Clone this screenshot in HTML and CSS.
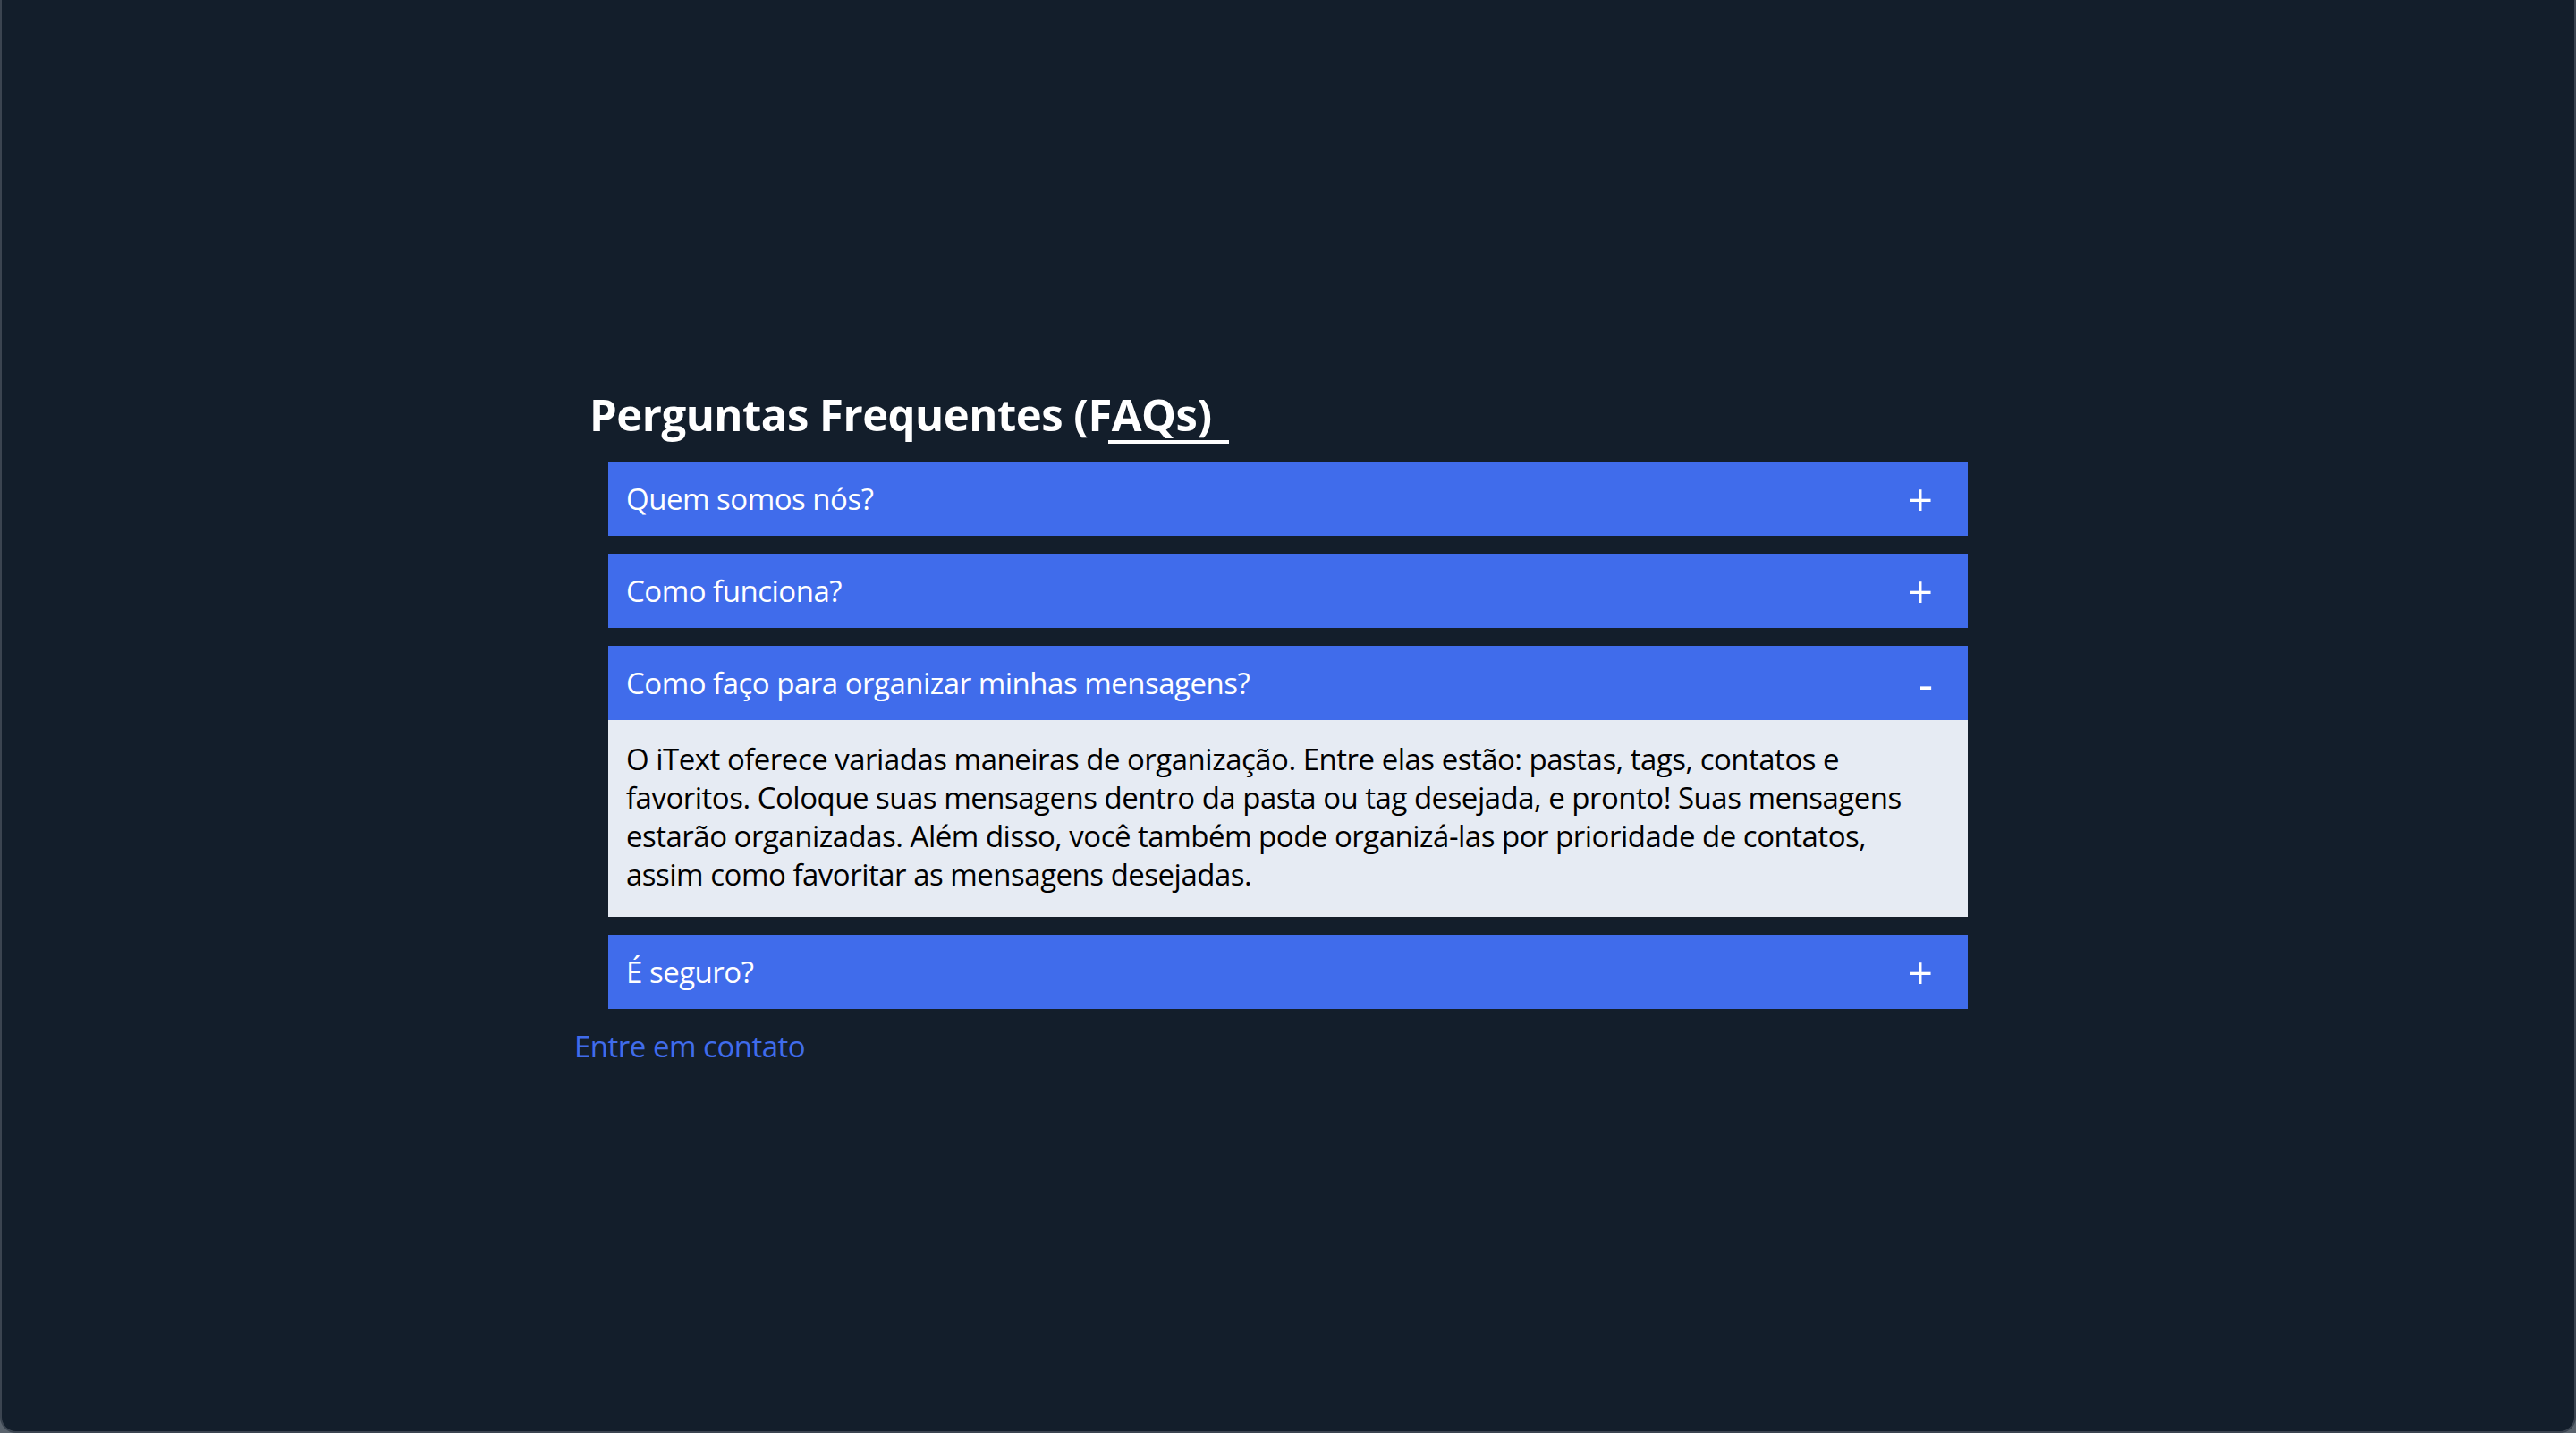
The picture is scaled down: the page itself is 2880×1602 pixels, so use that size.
FILE: index.html
```html
<!DOCTYPE html>
<html lang="pt-BR">
<head>
<meta charset="utf-8">
<title>Perguntas Frequentes (FAQs)</title>
<link rel="stylesheet" href="styles.css">
</head>
<body>
<div class="window">
  <main class="faq">
    <h1 class="faq-title">Perguntas Frequentes (FAQs)</h1>
    <div class="faq-list">
      <div class="faq-item">
        <div class="faq-q"><span class="faq-q-text">Quem somos nós?</span><span class="faq-icon">+</span></div>
      </div>
      <div class="faq-item">
        <div class="faq-q"><span class="faq-q-text">Como funciona?</span><span class="faq-icon">+</span></div>
      </div>
      <div class="faq-item is-open">
        <div class="faq-q"><span class="faq-q-text">Como faço para organizar minhas mensagens?</span><span class="faq-icon">-</span></div>
        <div class="faq-a">
          <p>O iText oferece variadas maneiras de organização. Entre elas estão: pastas, tags, contatos e favoritos. Coloque suas mensagens dentro da pasta ou tag desejada, e pronto! Suas mensagens estarão organizadas. Além disso, você também pode organizá-las por prioridade de contatos, assim como favoritar as mensagens desejadas.</p>
        </div>
      </div>
      <div class="faq-item">
        <div class="faq-q"><span class="faq-q-text">É seguro?</span><span class="faq-icon">+</span></div>
      </div>
    </div>
    <a class="faq-contact" href="#">Entre em contato</a>
  </main>
</div>
</body>
</html>
```
FILE: styles.css
```css
html, body {
  margin: 0;
  padding: 0;
  height: 100%;
  background: #5a636d;
}
body {
  font-family: "Open Sans", "Noto Sans", sans-serif;
  letter-spacing: -0.5px;
}
.window {
  box-sizing: border-box;
  height: 1602px;
  background: #131e2b;
  border: 2px solid #3b4450;
  border-top: none;
  border-radius: 0 0 18px 18px;
  padding-top: 433px;
}
.faq {
  margin-left: 636px;
  width: 1600px;
  display: flex;
  flex-direction: column;
}
.faq-title {
  position: relative;
  align-self: flex-start;
  margin: 0 0 23px 21px;
  color: #ffffff;
  font-size: 49px;
  font-weight: 700;
  line-height: 60px;
}
.faq-title::after {
  content: "";
  position: absolute;
  right: -19px;
  bottom: -3px;
  width: 135px;
  height: 4px;
  background: #ffffff;
}
.faq-list {
  margin-left: 42px;
  width: 1520px;
  display: flex;
  flex-direction: column;
  gap: 20px;
}
.faq-q {
  height: 83px;
  box-sizing: border-box;
  background: #406ceb;
  color: #ffffff;
  display: flex;
  align-items: center;
  justify-content: space-between;
  padding: 0 39px 0 20px;
  font-size: 33px;
}
.faq-icon {
  font-size: 50px;
  line-height: 1;
  letter-spacing: 0;
}
.faq-a {
  background: #e6ebf3;
  color: #000000;
  padding: 22px 30px 26px 20px;
}
.faq-a p {
  margin: 0;
  font-size: 33px;
  line-height: 43px;
}
.faq-contact {
  align-self: flex-start;
  margin: 19px 0 0 4px;
  color: #406ceb;
  text-decoration: none;
  font-size: 33px;
  line-height: 45px;
}
```
